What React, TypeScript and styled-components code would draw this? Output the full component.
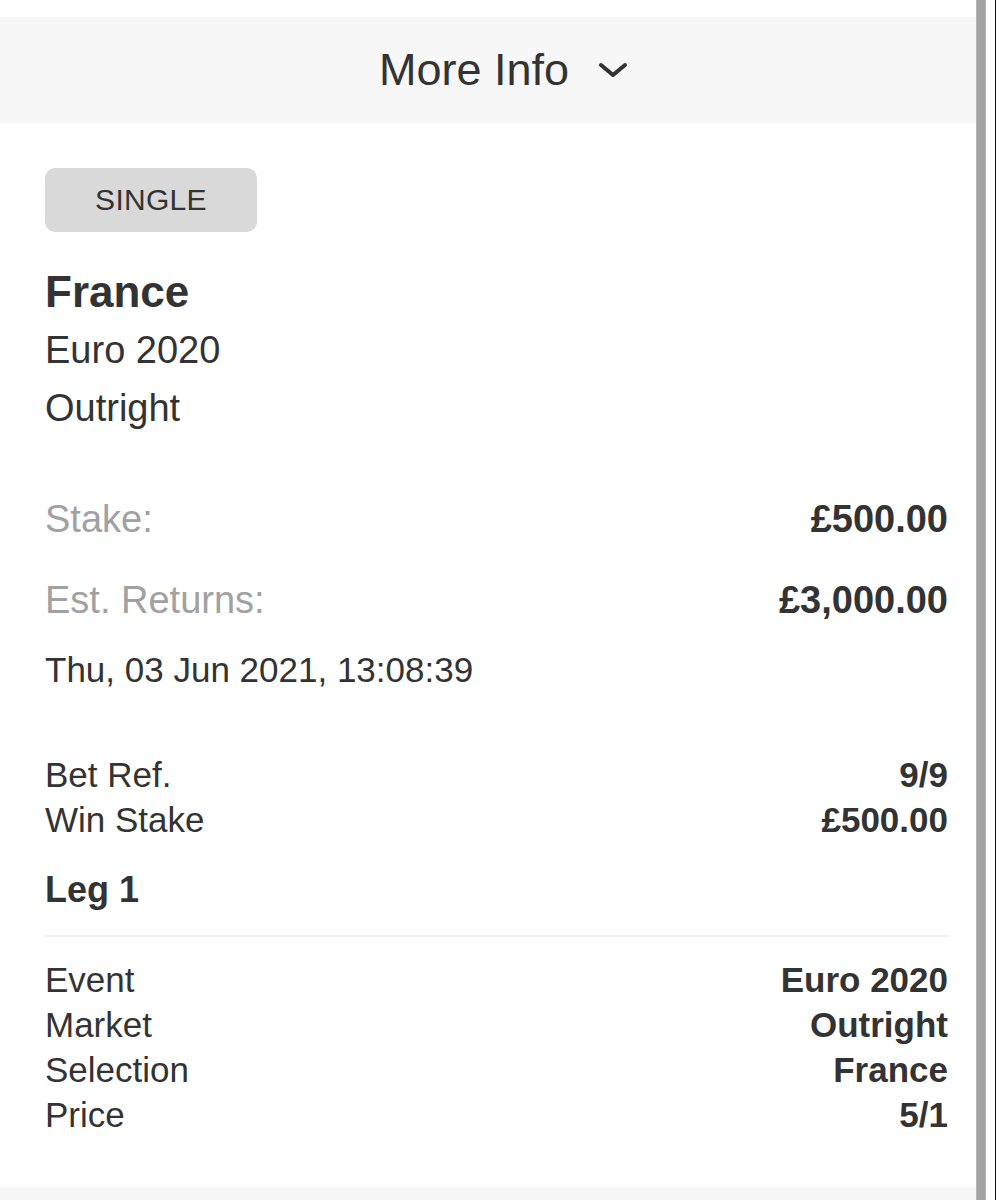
import React from 'react';
import styled, { createGlobalStyle } from 'styled-components';

const GlobalStyle = createGlobalStyle`
  html, body {
    margin: 0;
    padding: 0;
    background: #ffffff;
  }
  body {
    font-family: "Liberation Sans", Arial, Helvetica, sans-serif;
    color: #333333;
  }
`;

interface Row {
  label: string;
  value: string;
}

const betRows: Row[] = [
  { label: 'Bet Ref.', value: '9/9' },
  { label: 'Win Stake', value: '£500.00' },
];

const legRows: Row[] = [
  { label: 'Event', value: 'Euro 2020' },
  { label: 'Market', value: 'Outright' },
  { label: 'Selection', value: 'France' },
  { label: 'Price', value: '5/1' },
];

const App: React.FC = () => {
  return (
    <>
      <GlobalStyle />
      <Frame>
        <Main>
          <MoreInfoBar>
            <MoreInfoLabel>More Info</MoreInfoLabel>
            <svg width="30" height="16" viewBox="0 0 30 16">
              <polyline
                points="3,3 15,13 27,3"
                fill="none"
                stroke="#333"
                strokeWidth="4"
                strokeLinecap="round"
                strokeLinejoin="round"
              />
            </svg>
          </MoreInfoBar>

          <Content>
            <Badge>SINGLE</Badge>

            <Summary>
              <Selection>France</Selection>
              <SubLine>Euro 2020</SubLine>
              <SubLine>Outright</SubLine>
            </Summary>

            <Amounts>
              <AmountRow>
                <AmountLabel>Stake:</AmountLabel>
                <AmountValue>£500.00</AmountValue>
              </AmountRow>
              <AmountRow>
                <AmountLabel>Est. Returns:</AmountLabel>
                <AmountValue>£3,000.00</AmountValue>
              </AmountRow>
            </Amounts>

            <DateLine>Thu, 03 Jun 2021, 13:08:39</DateLine>

            <DetailList $top={57}>
              {betRows.map((r) => (
                <DetailRow key={r.label}>
                  <span>{r.label}</span>
                  <DetailValue>{r.value}</DetailValue>
                </DetailRow>
              ))}
            </DetailList>

            <LegTitle>Leg 1</LegTitle>
            <Divider />

            <DetailList $top={20}>
              {legRows.map((r) => (
                <DetailRow key={r.label}>
                  <span>{r.label}</span>
                  <DetailValue>{r.value}</DetailValue>
                </DetailRow>
              ))}
            </DetailList>
          </Content>

          <FooterBand />
        </Main>
        <ScrollTrack>
          <ScrollThumb />
        </ScrollTrack>
      </Frame>
    </>
  );
};

const Frame = styled.div`
  display: flex;
  width: 996px;
  height: 1200px;
  overflow: hidden;
  box-sizing: border-box;
  border-right: 1px solid #111111;
`;

const Main = styled.div`
  width: 976px;
  display: flex;
  flex-direction: column;
  padding-top: 17px;
  box-sizing: border-box;
`;

const MoreInfoBar = styled.div`
  height: 106px;
  background: #f7f7f7;
  display: flex;
  align-items: center;
  justify-content: center;
  gap: 29px;
  padding-left: 31px;
`;

const MoreInfoLabel = styled.span`
  font-size: 45px;
  color: #333333;
`;

const Content = styled.div`
  flex: 1;
  padding: 45px 28px 0 45px;
  display: flex;
  flex-direction: column;
`;

const Badge = styled.div`
  width: 212px;
  height: 64px;
  border-radius: 10px;
  background: #d9d9d9;
  display: flex;
  align-items: center;
  justify-content: center;
  font-size: 30px;
  color: #333333;
  letter-spacing: 0.3px;
`;

const Summary = styled.div`
  margin-top: 31px;
  display: flex;
  flex-direction: column;
`;

const Selection = styled.div`
  font-size: 44px;
  font-weight: 700;
  line-height: 58px;
`;

const SubLine = styled.div`
  font-size: 38px;
  line-height: 58px;
`;

const Amounts = styled.div`
  margin-top: 42px;
  display: flex;
  flex-direction: column;
`;

const AmountRow = styled.div`
  display: flex;
  justify-content: space-between;
  align-items: baseline;
  font-size: 38px;
  line-height: 81px;
`;

const AmountLabel = styled.span`
  color: #a1a1a1;
`;

const AmountValue = styled.span`
  font-weight: 700;
  color: #333333;
`;

const DateLine = styled.div`
  margin-top: 4px;
  font-size: 35px;
  line-height: 50px;
`;

const DetailList = styled.div<{ $top: number }>`
  margin-top: ${(p) => p.$top}px;
  display: flex;
  flex-direction: column;
`;

const DetailRow = styled.div`
  display: flex;
  justify-content: space-between;
  align-items: baseline;
  font-size: 35px;
  line-height: 45px;
`;

const DetailValue = styled.span`
  font-weight: 700;
`;

const LegTitle = styled.div`
  margin-top: 23px;
  font-size: 36px;
  font-weight: 700;
  line-height: 50px;
`;

const Divider = styled.hr`
  margin: 20px 0 0;
  border: none;
  height: 2px;
  background: #f0f0f0;
`;

const FooterBand = styled.div`
  height: 13px;
  background: #f7f7f7;
`;

const ScrollTrack = styled.div`
  flex: 1;
  display: flex;
  padding-right: 9px;
  background: #ffffff;
`;

const ScrollThumb = styled.div`
  width: 10px;
  background: #a3a3a3;
  border-left: 1px solid #b5b5b5;
  border-right: 1px solid #b5b5b5;
  box-sizing: border-box;
`;

export default App;
